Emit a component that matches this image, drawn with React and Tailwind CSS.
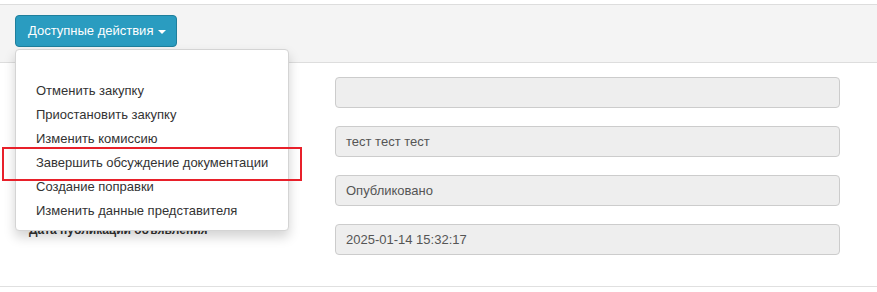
const menuItems = [
  'Отменить закупку',
  'Приостановить закупку',
  'Изменить комиссию',
  'Завершить обсуждение документации',
  'Создание поправки',
  'Изменить данные представителя',
]

// labels of the first rows sit under the open menu, so only the last one shows
const fields = [
  { label: '', value: '' },
  { label: '', value: 'тест тест тест' },
  { label: '', value: 'Опубликовано' },
  { label: 'Дата публикации объявления', value: '2025-01-14 15:32:17' },
]

const App = () => {
  return (
    <div className="relative w-[877px] h-[292px] bg-white overflow-hidden text-[#333]" style={{ fontFamily: '"Liberation Sans", Arial, sans-serif' }}>
      <div className="mt-[4px] h-[59px] bg-[#f4f4f4] border-t border-b border-[#dddddd] pl-[15px] pt-[10px]">
        <button className="h-[32px] pl-[12px] pr-[10px] bg-[#2a9cc0] border border-[#1f7f9c] rounded-[4px] text-white text-[13px] flex items-center gap-[5px]">
          Доступные действия
          <span className="w-0 h-0 border-l-[4px] border-r-[4px] border-t-[4px] border-l-transparent border-r-transparent border-t-white mt-[1px]" />
        </button>
      </div>

      <div className="flex flex-col gap-[18px] pt-[14px]">
        {fields.map((f, i) => (
          <div key={i} className="flex h-[31px]">
            <div className="w-[335px] pl-[29px] -mt-[3px] text-[12px] font-bold">{f.label}</div>
            <div className="w-[505px] h-[31px] bg-[#eeeeee] border border-[#cccccc] rounded-[4px] px-[10px] flex items-center text-[13px] text-[#555]">
              {f.value}
            </div>
          </div>
        ))}
      </div>

      <div className="mt-[31px] border-t border-[#e0e0e0]" />

      <div className="absolute left-[15px] top-[49px] w-[274px] bg-white border border-[#d4d4d4] rounded-[4px] shadow-[0_6px_12px_rgba(0,0,0,0.175)] pt-[29px] pb-[7px]">
        {menuItems.map((item) => (
          <div key={item} className="h-[24px] px-[20px] flex items-center text-[13px] text-[#333] whitespace-nowrap">
            {item}
          </div>
        ))}
      </div>

      <div className="absolute left-[2px] top-[147px] w-[300px] h-[34px] border-[2px] border-[#e8202a]" />
    </div>
  )
}

export default App
